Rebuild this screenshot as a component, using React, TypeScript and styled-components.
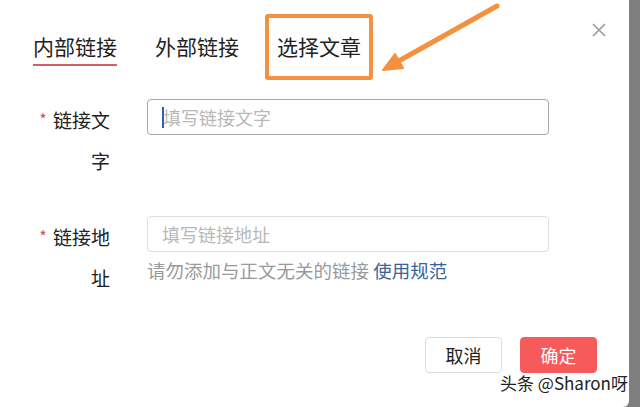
import React from 'react';
import styled, { createGlobalStyle } from 'styled-components';

const GlobalStyle = createGlobalStyle`
  html, body {
    margin: 0;
    padding: 0;
    background: #7f7f7f;
  }
  body {
    font-family: "Noto Sans CJK SC", "Noto Sans", sans-serif;
  }
`;

const Dialog = styled.div`
  position: relative;
  width: 629px;
  height: 407px;
  background: #fff;
  border-bottom-right-radius: 6px;
  overflow: hidden;
`;

const Tabs = styled.div`
  display: flex;
  gap: 38px;
  padding: 31px 0 0 33px;
`;

const Tab = styled.div<{ $active?: boolean }>`
  font-size: 21px;
  line-height: 30px;
  color: #222;
  padding-bottom: 3px;
  border-bottom: 2px solid ${p => (p.$active ? '#cf6066' : 'transparent')};
`;

const Highlight = styled.div`
  position: absolute;
  left: 265px;
  top: 14px;
  width: 100px;
  height: 58px;
  border: 4px solid #f3913f;
  border-radius: 3px;
`;

const Arrow = styled.svg`
  position: absolute;
  left: 375px;
  top: 0;
`;

const Close = styled.div`
  position: absolute;
  top: 19px;
  right: 22px;
  width: 16px;
  height: 16px;
`;

const Form = styled.div`
  display: flex;
  flex-direction: column;
  gap: 35px;
  padding: 33px 0 0 33px;
`;

const Row = styled.div`
  display: flex;
  align-items: flex-start;
`;

const LabelCol = styled.div`
  width: 114px;
  display: flex;
  align-items: flex-start;
`;

const Star = styled.span`
  color: #d0505c;
  font-size: 16px;
  line-height: 41px;
  width: 20px;
  text-align: center;
`;

const Label = styled.div`
  width: 57px;
  font-size: 19px;
  line-height: 41px;
  color: #222;
  text-align: right;
`;

const Field = styled.div`
  display: flex;
  flex-direction: column;
`;

const Input = styled.div<{ $focused?: boolean }>`
  box-sizing: border-box;
  width: 402px;
  height: 36px;
  border: 1px solid ${p => (p.$focused ? '#a8a8a8' : '#dedede')};
  border-radius: 4px;
  padding-left: 14px;
  display: flex;
  align-items: center;
  font-size: 18px;
  color: #b8b8b8;
`;

const Caret = styled.span`
  display: inline-block;
  width: 2px;
  height: 21px;
  background: #2f5fb0;
  margin-right: -1px;
`;

const Hint = styled.div`
  margin-top: 6px;
  font-size: 18.5px;
  line-height: 24px;
  color: #9a9a9a;
`;

const HintLink = styled.span`
  color: #3b6496;
`;

const Footer = styled.div`
  display: flex;
  justify-content: flex-end;
  gap: 18px;
  padding-right: 32px;
  margin-top: 39px;
`;

const Button = styled.div<{ $primary?: boolean }>`
  box-sizing: border-box;
  width: 77px;
  height: 36px;
  border-radius: 4px;
  display: flex;
  align-items: center;
  justify-content: center;
  font-size: 18px;
  color: ${p => (p.$primary ? '#fff' : '#222')};
  background: ${p => (p.$primary ? '#f65a5a' : '#fff')};
  border: 1px solid ${p => (p.$primary ? '#f65a5a' : '#dcdcdc')};
`;

const Watermark = styled.div`
  position: absolute;
  right: 1px;
  bottom: 13px;
  font-size: 17px;
  line-height: 22px;
  color: #222;
  text-shadow: 0 0 2px #fff, 0 0 2px #fff;
`;

export default function App() {
  return (
    <>
      <GlobalStyle />
      <Dialog>
        <Tabs>
          <Tab $active>内部链接</Tab>
          <Tab>外部链接</Tab>
          <Tab>选择文章</Tab>
        </Tabs>
        <Highlight />
        <Arrow width="135" height="80" viewBox="0 0 135 80">
          <line x1="122" y1="6" x2="22" y2="62" stroke="#f3913f" strokeWidth="5" strokeLinecap="round" />
          <polygon points="8,70 28,68 20,54" fill="#f3913f" stroke="#f3913f" strokeWidth="2" strokeLinejoin="round" />
        </Arrow>
        <Close>
          <svg width="16" height="16" viewBox="0 0 16 16">
            <path d="M2 2 L14 14 M14 2 L2 14" stroke="#9a9a9a" strokeWidth="1.6" />
          </svg>
        </Close>
        <Form>
          <Row>
            <LabelCol>
              <Star>*</Star>
              <Label>链接文字</Label>
            </LabelCol>
            <Field>
              <Input $focused>
                <Caret />
                填写链接文字
              </Input>
            </Field>
          </Row>
          <Row>
            <LabelCol>
              <Star>*</Star>
              <Label>链接地址</Label>
            </LabelCol>
            <Field>
              <Input>填写链接地址</Input>
              <Hint>
                请勿添加与正文无关的链接 <HintLink>使用规范</HintLink>
              </Hint>
            </Field>
          </Row>
        </Form>
        <Footer>
          <Button>取消</Button>
          <Button $primary>确定</Button>
        </Footer>
        <Watermark>头条 @Sharon呀</Watermark>
      </Dialog>
    </>
  );
}
